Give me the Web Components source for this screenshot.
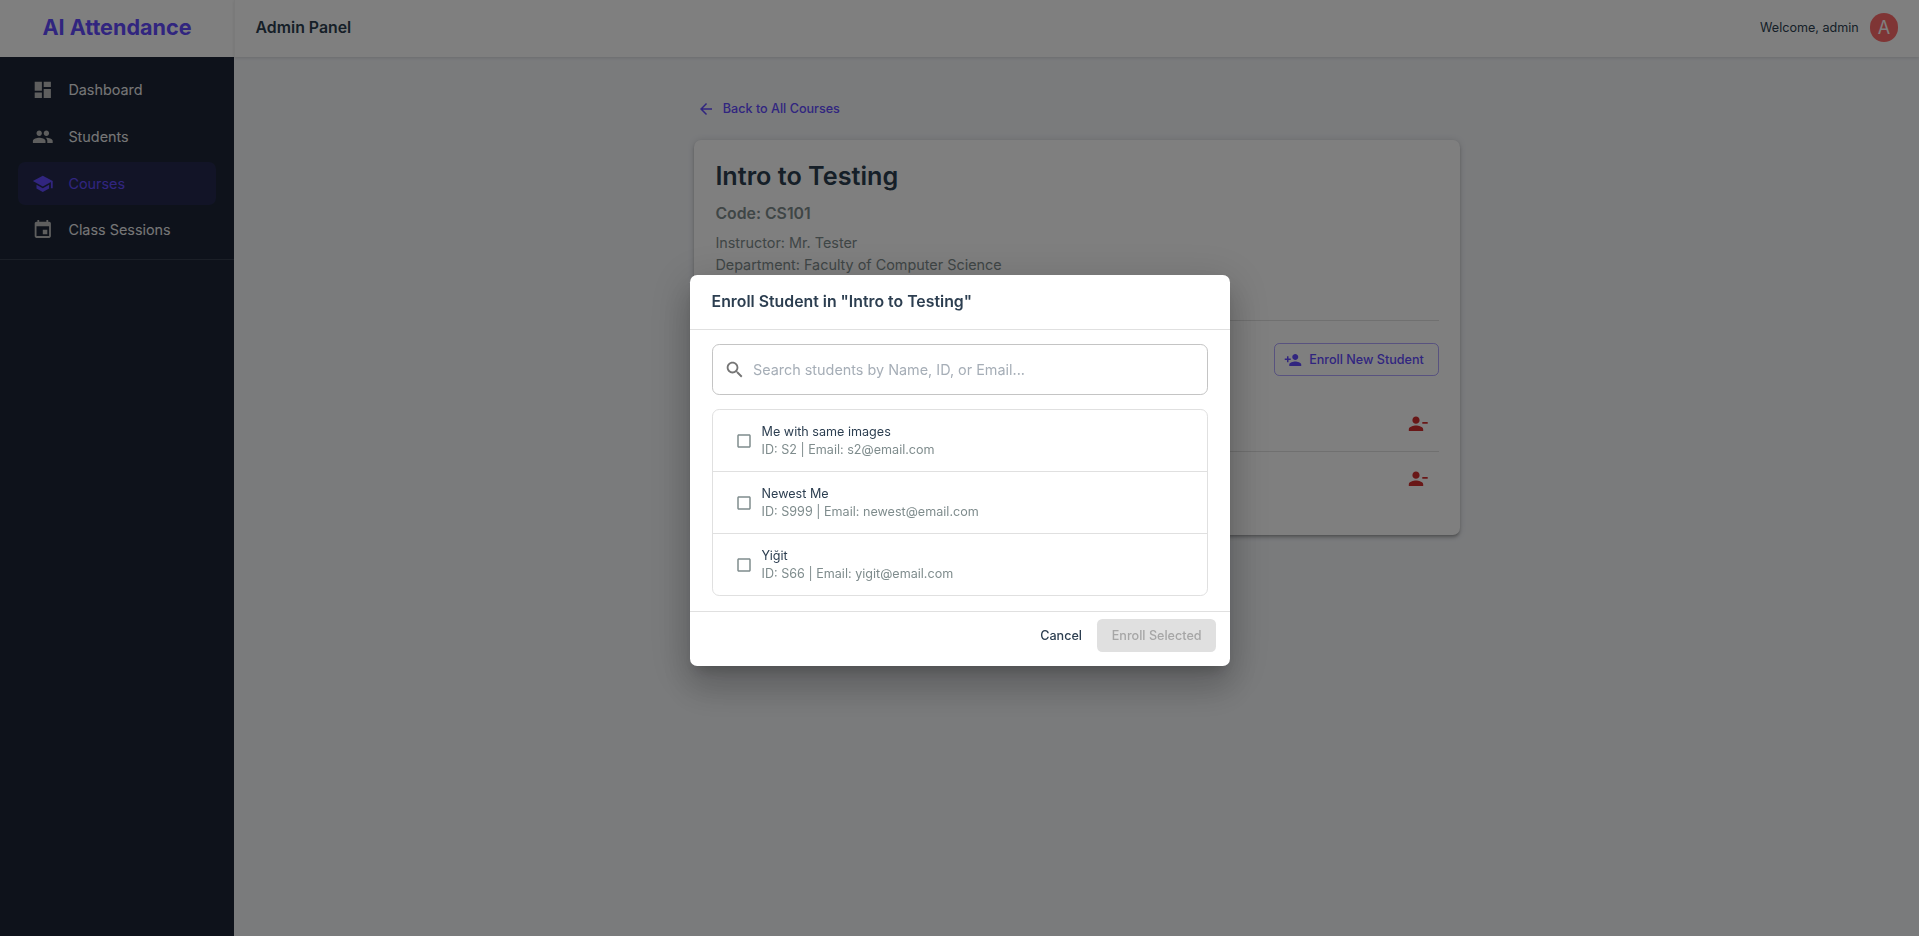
<!DOCTYPE html>
<html lang="en">
<head>
<meta charset="utf-8">
<title>AI Attendance</title>
<style>
html,body{margin:0;height:100%;overflow:hidden}
body{font-family:Inter,"Liberation Sans",sans-serif;color:#2c3e50;--primary:#624bff;--line:#e0e0e0;--muted:#7f8c8d}
</style>
</head>
<body>
<attendance-app></attendance-app>
<script>
const ICONS={
dashboard:'M3 13h8V3H3v10zm0 8h8v-6H3v6zm10 0h8V11h-8v10zm0-18v6h8V3h-8z',
people:'M16 11c1.66 0 2.99-1.34 2.99-3S17.66 5 16 5c-1.66 0-3 1.34-3 3s1.34 3 3 3zm-8 0c1.66 0 2.99-1.34 2.99-3S9.66 5 8 5C6.34 5 5 6.34 5 8s1.34 3 3 3zm0 2c-2.33 0-7 1.17-7 3.5V19h14v-2.5c0-2.33-4.67-3.5-7-3.5zm8 0c-.29 0-.62.02-.97.05 1.16.84 1.97 1.97 1.97 3.45V19h6v-2.5c0-2.33-4.67-3.5-7-3.5z',
school:'M5 13.18v4L12 21l7-3.82v-4L12 17l-7-3.82zM12 3 1 9l11 6 9-4.91V17h2V9L12 3z',
event:'M17 12h-5v5h5v-5zM16 1v2H8V1H6v2H5c-1.11 0-1.99.9-1.99 2L3 19c0 1.1.89 2 2 2h14c1.1 0 2-.9 2-2V5c0-1.1-.9-2-2-2h-1V1h-2zm3 18H5V8h14v11z',
back:'M20 11H7.83l5.59-5.59L12 4l-8 8 8 8 1.41-1.41L7.83 13H20v-2z',
search:'M15.5 14h-.79l-.28-.27C15.41 12.59 16 11.11 16 9.5 16 5.91 13.09 3 9.5 3S3 5.91 3 9.5 5.91 16 9.5 16c1.61 0 3.09-.59 4.23-1.57l.27.28v.79l5 4.99L20.49 19l-4.99-5zm-6 0C7.01 14 5 11.99 5 9.5S7.01 5 9.5 5 14 7.01 14 9.5 11.99 14 9.5 14z',
add:'M15 12c2.21 0 4-1.79 4-4s-1.79-4-4-4-4 1.79-4 4 1.79 4 4 4zm-9-2V7H4v3H1v2h3v3h2v-3h3v-2H6zm9 4c-2.67 0-8 1.34-8 4v2h16v-2c0-2.66-5.33-4-8-4z',
remove:'M14 8c0-2.21-1.79-4-4-4S6 5.79 6 8s1.79 4 4 4 4-1.79 4-4zm3 2v2h6v-2h-6zM2 18v2h16v-2c0-2.66-5.33-4-8-4s-8 1.34-8 4z',
box:'M19 5v14H5V5h14m0-2H5c-1.1 0-2 .9-2 2v14c0 1.1.9 2 2 2h14c1.1 0 2-.9 2-2V5c0-1.1-.9-2-2-2z'
};
const define=(name,render)=>customElements.define(name,class extends HTMLElement{
  constructor(){super();this.attachShadow({mode:'open'});}
  connectedCallback(){this.shadowRoot.innerHTML=render(this);}
});
define('app-icon',e=>`<style>:host{display:block;flex:none;width:var(--size,21.6px);height:var(--size,21.6px)}svg{display:block;width:100%;height:100%;fill:currentColor}</style>
<svg viewBox="0 0 24 24"><path d="${ICONS[e.getAttribute('name')]}"/></svg>`);

define('nav-item',e=>`<style>
:host{display:flex;align-items:center;box-sizing:border-box;height:43.2px;margin:0 18px 3.6px;padding:0 14.4px;border-radius:7.2px;color:#ececee;font-size:14.4px;line-height:21.6px}
app-icon{margin-right:14.4px;color:#bdbdbd}
:host([active]){background:rgba(98,75,255,.12);color:var(--primary)}
:host([active]) app-icon{color:var(--primary)}
</style><app-icon name="${e.getAttribute('icon')}"></app-icon><span><slot></slot></span>`);

define('side-bar',()=>`<style>
:host{display:block;background:#1c2536;width:234px;height:100%}
.brand{height:57px;box-sizing:border-box;padding-bottom:3px;background:#fff;display:flex;align-items:center;justify-content:center;font-size:21.6px;font-weight:700;color:var(--primary)}
nav{padding-top:11.2px;height:190.8px;border-bottom:1px solid rgba(255,255,255,.12)}
</style>
<div class="brand">AI Attendance</div>
<nav><nav-item icon="dashboard">Dashboard</nav-item><nav-item icon="people">Students</nav-item><nav-item icon="school" active>Courses</nav-item><nav-item icon="event">Class Sessions</nav-item></nav>`);

define('top-bar',()=>`<style>
:host{display:flex;align-items:center;justify-content:space-between;box-sizing:border-box;height:57px;padding:0 20.6px 2px;background:#fff;border-left:1px solid #f4f4f4;box-shadow:0 1px 3px rgba(0,0,0,.12)}
b{font-size:15.84px;font-weight:600;margin-bottom:1px}
.user{display:flex;align-items:center;gap:10.8px;font-size:12.6px}
i{display:flex;align-items:center;justify-content:center;width:28.8px;height:28.8px;border-radius:50%;background:#ff6b6b;color:#fff;font-style:normal;font-size:18px}
</style><b>Admin Panel</b><div class="user"><span>Welcome, admin</span><i>A</i></div>`);

define('student-row',()=>`<style>
:host{display:flex;align-items:center;justify-content:flex-end;height:54px;padding-right:10.8px;color:#d32f2f;border-bottom:1px solid var(--line)}
:host(:last-of-type){border:0}
</style><app-icon name="remove"></app-icon>`);

define('course-card',()=>`<style>
:host{display:block;box-sizing:border-box;height:395px;padding:21px 21px 21px 21.4px;background:#fff;border-radius:7.2px;box-shadow:0 2.7px 2.7px -1.8px rgba(0,0,0,.2),0 2.7px 3.6px rgba(0,0,0,.14),0 .9px 7.2px rgba(0,0,0,.12)}
h1{margin:0;font-size:25.2px;line-height:30px;font-weight:600}
h2{margin:10px 0 5px;font-size:15.84px;line-height:26px;font-weight:600;color:var(--muted)}
p{margin:0;font-size:14.4px;line-height:22px;color:var(--muted)}
.tools{display:flex;justify-content:flex-end;margin-top:44px;padding:22px 0 21px;border-top:1px solid var(--line)}
button{display:flex;align-items:center;gap:7.2px;height:33px;width:165px;box-sizing:border-box;padding:0 0 0 9px;border:1px solid rgba(98,75,255,.5);border-radius:5.4px;background:none;font:500 12.6px Inter,sans-serif;color:var(--primary);white-space:nowrap}
app-icon{--size:18px}
</style>
<h1>Intro to Testing</h1><h2>Code: CS101</h2><p>Instructor: Mr. Tester</p><p>Department: Faculty of Computer Science</p>
<div class="tools"><button><app-icon name="add"></app-icon>Enroll New Student</button></div>
<student-row></student-row><student-row></student-row>`);

define('student-option',e=>`<style>
:host{display:flex;align-items:center;gap:8.8px;height:60px;padding:1px 0 0 22.2px;border-top:1px solid var(--line);font-size:12.6px;line-height:18px}
:host(:first-of-type){border-top:0}
app-icon{--size:18px;color:var(--muted)}
small{display:block;font-size:12.6px;color:var(--muted)}
</style><app-icon name="box"></app-icon><div><slot></slot><small>${e.getAttribute('detail')}</small></div>`);

define('enroll-dialog',()=>`<style>
:host{display:block;width:540px;height:391px;box-sizing:border-box;background:#fff;border-radius:7.2px;box-shadow:0 9.9px 13.5px -6.3px rgba(0,0,0,.2),0 21.6px 34.2px 2.7px rgba(0,0,0,.14),0 8.1px 41.4px 7.2px rgba(0,0,0,.12)}
header{height:54px;box-sizing:border-box;padding:0 21.6px 2px;display:flex;align-items:center;font-size:15.84px;font-weight:600}
section{padding:14.4px 21.6px;border:solid var(--line);border-width:1px 0;height:283px;box-sizing:border-box}
.search{display:flex;align-items:center;gap:7.6px;height:51px;box-sizing:border-box;padding:0 11.2px;border:1px solid #c4c4c4;border-radius:7.2px;font-size:14.4px;color:#a6aeb7}
.search app-icon{color:#757575}
.list{margin-top:13.6px;border:1px solid var(--line);border-radius:7.2px;overflow:hidden}
footer{display:flex;justify-content:flex-end;gap:1px;padding:7.2px 14px}
button{height:33px;border:0;border-radius:5.4px;background:none;padding:0 14.4px;font:500 12.6px Inter,sans-serif;color:inherit}
.off{background:#e0e0e0;color:#a6a6a6}
</style>
<header>Enroll Student in "Intro to Testing"</header>
<section><div class="search"><app-icon name="search"></app-icon><span>Search students by Name, ID, or Email...</span></div>
<div class="list">
<student-option detail="ID: S2 | Email: s2@email.com">Me with same images</student-option>
<student-option detail="ID: S999 | Email: newest@email.com">Newest Me</student-option>
<student-option detail="ID: S66 | Email: yigit@email.com">Yiğit</student-option>
</div></section>
<footer><button>Cancel</button><button class="off">Enroll Selected</button></footer>`);

define('attendance-app',()=>`<style>
:host{display:block;height:100%}
.page{display:grid;grid-template-columns:234px 1fr;height:100%;background:#f4f6f9}
main{width:766px;margin:0 auto;padding:36px 0 0 1px}
.back{display:flex;align-items:center;gap:8px;height:31px;margin-bottom:16px;padding-left:2.8px;font-size:12.6px;font-weight:500;color:var(--primary)}
.back app-icon{--size:18px}
.overlay{position:fixed;inset:0;display:flex;align-items:center;justify-content:center;padding:5px 0 0 1px;background:rgba(0,0,0,.5)}
</style>
<div class="page"><side-bar></side-bar><div><top-bar></top-bar><main><div class="back"><app-icon name="back"></app-icon>Back to All Courses</div><course-card></course-card></main></div></div>
<div class="overlay"><enroll-dialog></enroll-dialog></div>`);
</script>
</body>
</html>
